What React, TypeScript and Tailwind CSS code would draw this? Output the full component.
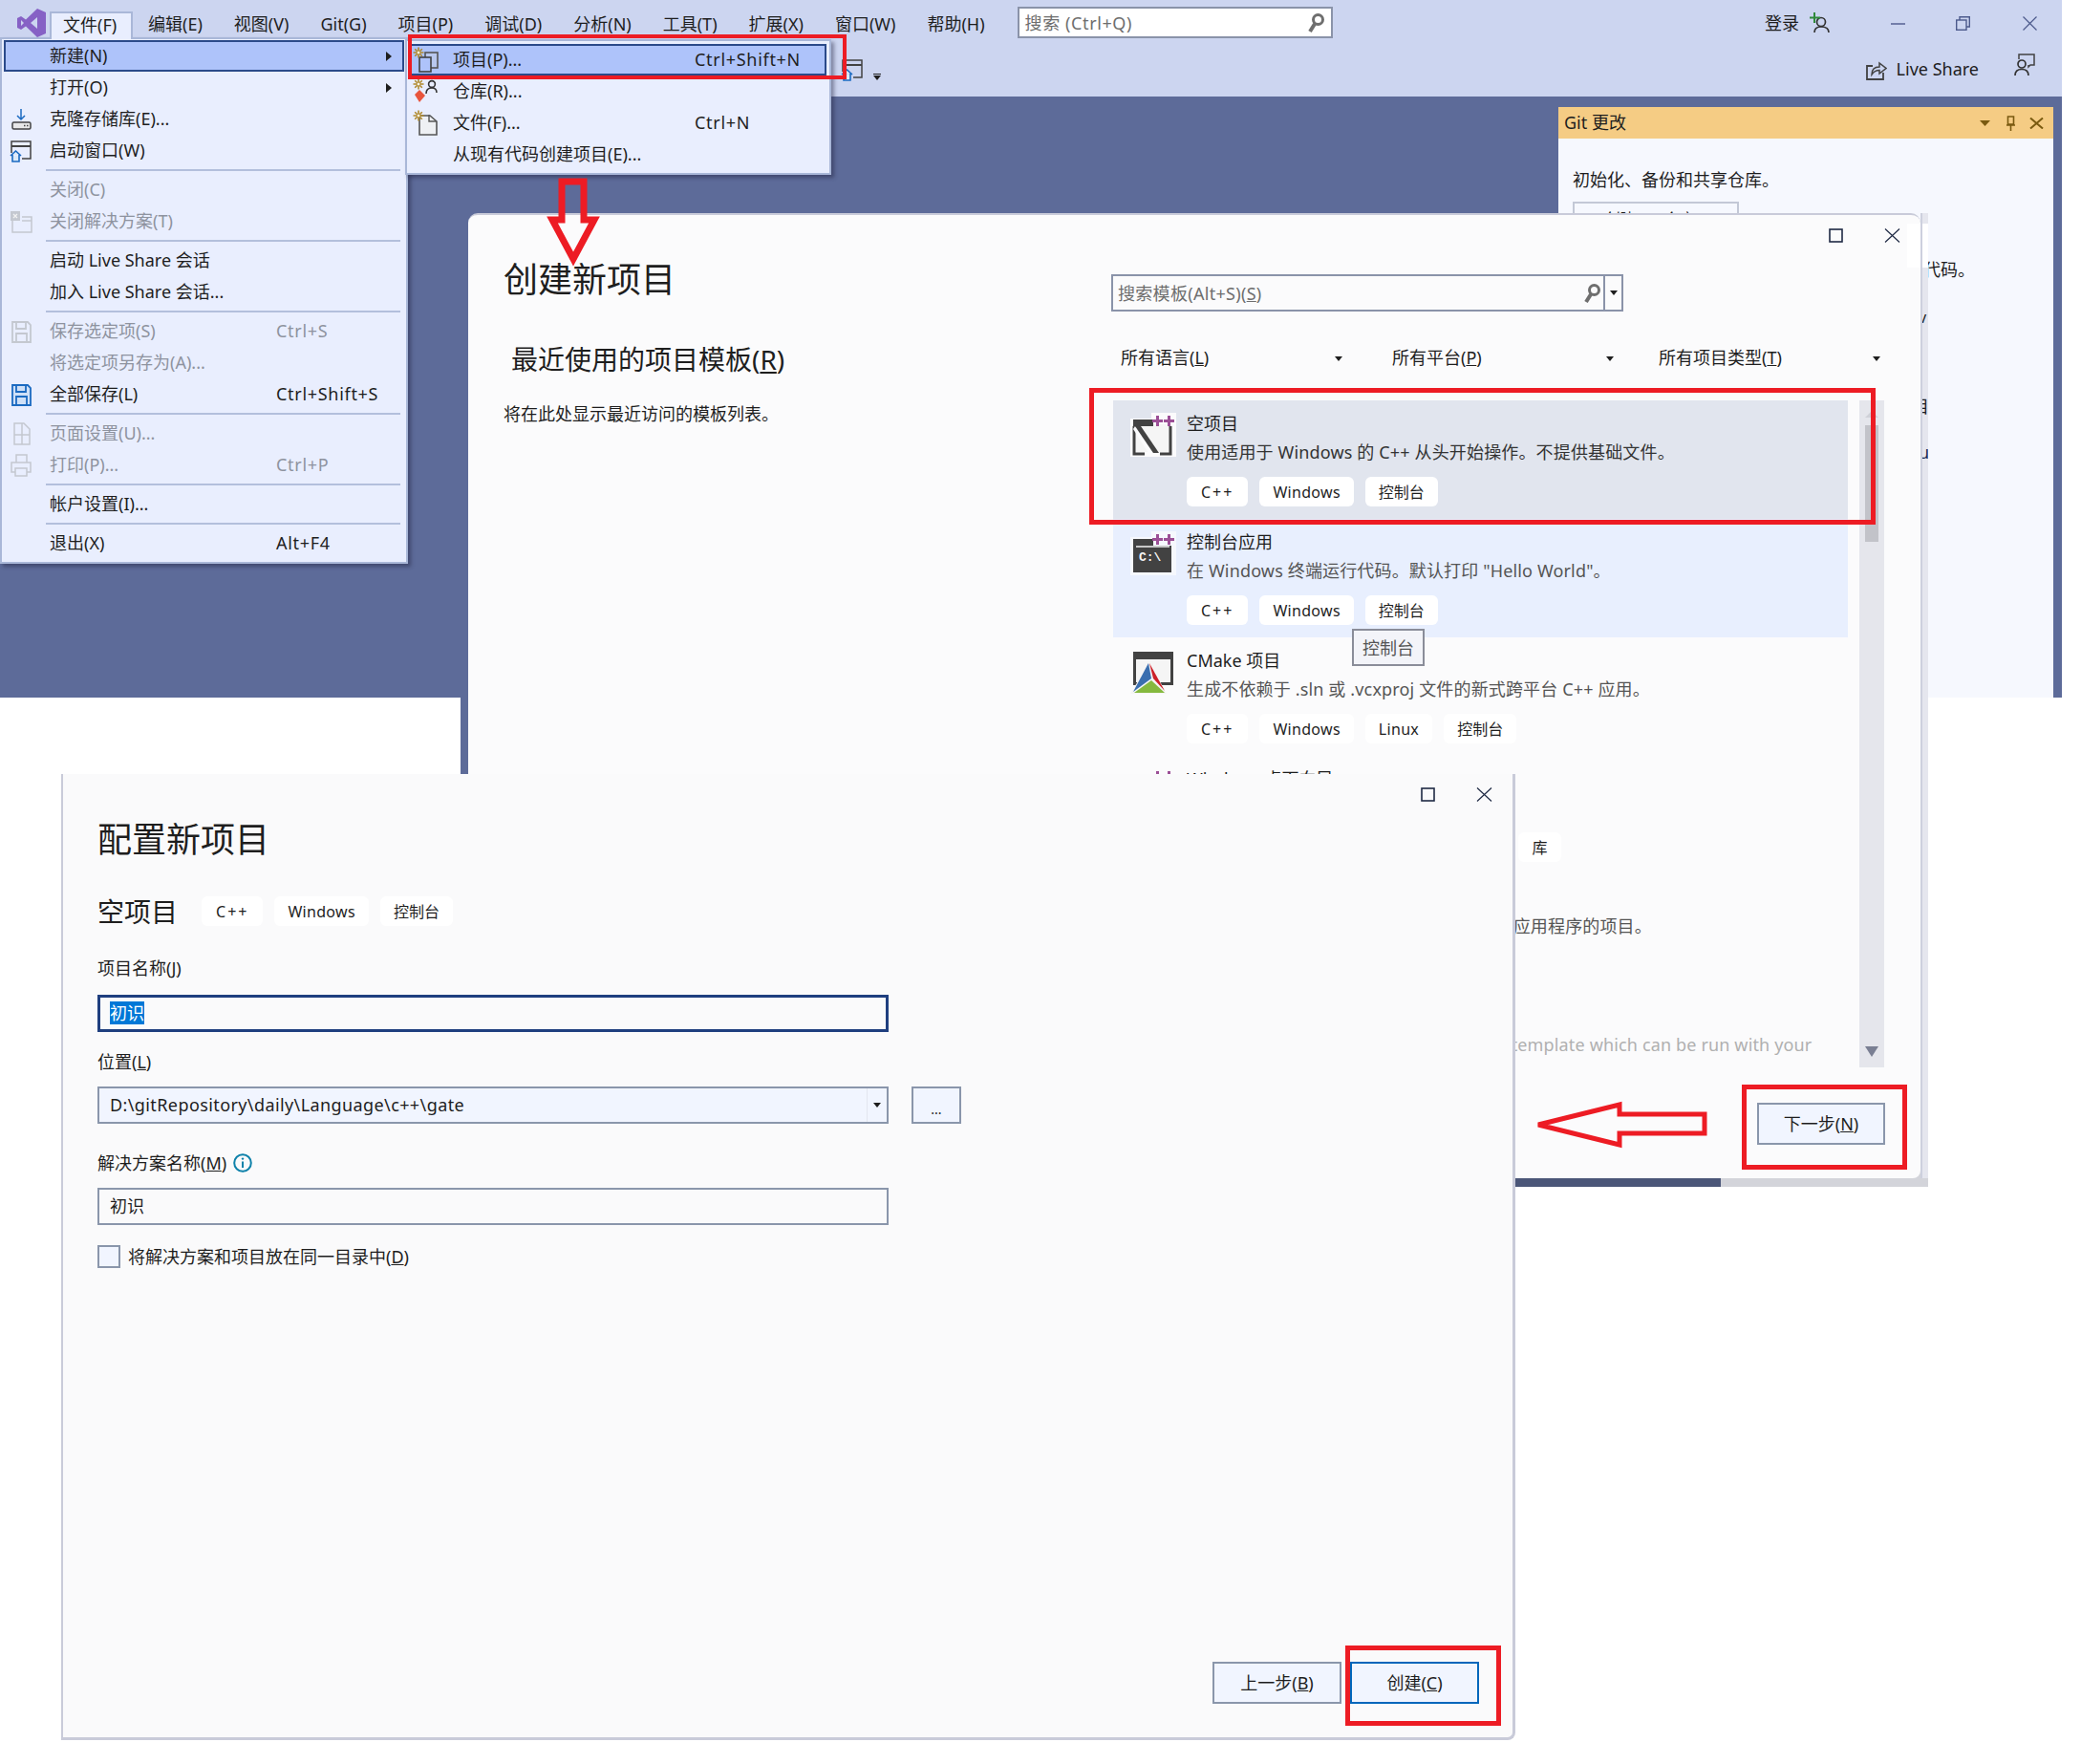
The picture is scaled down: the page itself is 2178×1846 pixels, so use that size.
import type { ReactNode } from "react";

const menuBar = ["编辑(E)", "视图(V)", "Git(G)", "项目(P)", "调试(D)", "分析(N)", "工具(T)", "扩展(X)", "窗口(W)", "帮助(H)"];

function Sparkle() {
  return (
    <g stroke="#b08a2e" strokeWidth="1.6">
      <path d="M6 0.5V11.5M0.5 6H11.5M2.2 2.2L9.8 9.8M9.8 2.2L2.2 9.8" />
      <circle cx="6" cy="6" r="2" fill="#f7f3e3" strokeWidth="1" />
    </g>
  );
}

function CloneIcon() {
  return (
    <svg width="24" height="24" viewBox="0 0 24 24" fill="none">
      <path d="M12 1V12M8 8L12 12L16 8" stroke="#1b6ac1" strokeWidth="1.5" />
      <rect x="3" y="15" width="19" height="7" rx="1.5" fill="#e8e8e8" stroke="#424242" strokeWidth="1.5" />
      <path d="M15 18.5H16.5M18 18.5H19.5" stroke="#424242" strokeWidth="1.5" />
    </svg>
  );
}

function StartWindowIcon() {
  return (
    <svg width="24" height="24" viewBox="0 0 24 24" fill="none">
      <path d="M2 14V2H22V20H13" stroke="#424242" strokeWidth="1.5" />
      <path d="M2 7H22" stroke="#424242" strokeWidth="2" />
      <path d="M1 17L6.5 12L12 17M3 16V23H10V16" fill="#dbe9f8" stroke="#1b6ac1" strokeWidth="1.6" />
    </svg>
  );
}

function CloseSolutionIcon() {
  return (
    <svg width="24" height="24" viewBox="0 0 24 24" fill="none">
      <path d="M3 8V23H23V7H13" stroke="#c4c8d0" strokeWidth="1.5" />
      <path d="M13 11H23" stroke="#c4c8d0" strokeWidth="1.5" />
      <rect x="1" y="1" width="10" height="10" fill="#c4c8d0" />
      <path d="M4 4L8 8M8 4L4 8" stroke="#f2f2f2" strokeWidth="1.3" />
    </svg>
  );
}

function SaveIcon({ color, fill }: { color: string; fill: string }) {
  return (
    <svg width="24" height="24" viewBox="0 0 24 24" fill="none">
      <path d="M3 2H19L22 5V23H3Z" fill={fill} stroke={color} strokeWidth="1.8" />
      <path d="M7 2V9H17V2M7 23V14H18V23" stroke={color} strokeWidth="1.8" />
    </svg>
  );
}

function PageSetupIcon() {
  return (
    <svg width="24" height="24" viewBox="0 0 24 24" fill="none" stroke="#c4c8d0" strokeWidth="1.5">
      <path d="M5 1H15L21 7V23H5Z M13 1V23M5 13H21" />
    </svg>
  );
}

function PrintIcon() {
  return (
    <svg width="24" height="24" viewBox="0 0 24 24" fill="none" stroke="#c4c8d0" strokeWidth="1.5">
      <path d="M7 9V1H18V9M6 19H2V9H22V19H18" />
      <path d="M6 15H18V23H6Z" />
    </svg>
  );
}

function ProjectMenuIcon() {
  return (
    <svg width="28" height="28" viewBox="0 0 28 28" fill="none">
      <rect x="13" y="6" width="13" height="16" fill="#b9c8ee" stroke="#555" strokeWidth="1.6" />
      <rect x="7" y="11" width="12" height="15" fill="#aec3fa" stroke="#424242" strokeWidth="1.6" />
      <Sparkle />
    </svg>
  );
}

function RepoMenuIcon() {
  return (
    <svg width="28" height="28" viewBox="0 0 28 28" fill="none">
      <Sparkle />
      <path d="M2 17L7 12L13 18L7 25Z" fill="#e8553d" />
      <circle cx="20" cy="6" r="3.4" stroke="#333" strokeWidth="1.6" />
      <path d="M14 16C14 11 17 10 20 10C23 10 25 12 25 15" stroke="#333" strokeWidth="1.6" />
    </svg>
  );
}

function FileMenuIcon() {
  return (
    <svg width="28" height="28" viewBox="0 0 28 28" fill="none">
      <path d="M7 6H18L25 12V26H7Z" fill="#eef0f4" stroke="#555" strokeWidth="1.6" />
      <path d="M17 5V12H25" stroke="#555" strokeWidth="1.4" />
      <Sparkle />
    </svg>
  );
}

function Plus2() {
  return (
    <g fill="#9b4f96">
      <path d="M27 3H30V7H34V10H30V14H27V10H23V7H27Z" />
      <path d="M39 3H42V7H46V10H42V14H39V10H35V7H39Z" />
    </g>
  );
}

function EmptyProjectIcon() {
  return (
    <svg width="48" height="48" viewBox="0 0 48 48">
      <path d="M0 6H22V0H48V46H0Z" fill="#fbfbfc" />
      <rect x="5" y="12" width="37" height="29" fill="#f5f5f5" />
      <path d="M3 7H24V14H3Z" fill="#424242" />
      <path d="M42 14V43H31M4 14V43H15" fill="none" stroke="#424242" strokeWidth="3" />
      <path d="M3 17L5 14L24 42L19 42Z" fill="#fbfbfc" />
      <path d="M5 14H11L30 42H24Z" fill="#424242" />
      <Plus2 />
    </svg>
  );
}

function ConsoleIcon() {
  return (
    <svg width="48" height="48" viewBox="0 0 48 48">
      <path d="M0 6H22V0H48V46H0Z" fill="#f6f8fd" />
      <path d="M3 8H24V15H43V43H3Z" fill="#424242" />
      <path d="M6 16H41" stroke="#f5f5f5" strokeWidth="1.4" />
      <text x="9" y="31" fill="#f5f5f5" fontSize="13" fontWeight="700" fontFamily="Liberation Mono">C:\</text>
      <Plus2 />
    </svg>
  );
}

function CMakeIcon() {
  return (
    <svg width="48" height="48" viewBox="0 0 48 48">
      <path d="M3 2H45V37H3Z" fill="#424242" />
      <rect x="6" y="10" width="36" height="24" fill="#f5f5f5" />
      <path d="M20 13L0 46H38Z" fill="#f5f5f5" />
      <path d="M19 14L3 44L22 30Z" fill="#3a6eaf" />
      <path d="M20 14L36 43L24 30Z" fill="#cc2029" />
      <path d="M4 45L22 32L36 45Z" fill="#85b93f" />
    </svg>
  );
}

function SearchGlyph() {
  return (
    <svg width="20" height="22" viewBox="0 0 20 22" fill="none" stroke="#6e6e6e">
      <circle cx="12.5" cy="7.5" r="5" strokeWidth="3" />
      <path d="M9 12L4 20" strokeWidth="4" />
    </svg>
  );
}

function Caret({ color = "#1e1e1e" }: { color?: string }) {
  return (
    <svg width="8" height="5" viewBox="0 0 8 5">
      <path d="M0 0H8L4 5Z" fill={color} />
    </svg>
  );
}

function SideCaret() {
  return (
    <svg width="6" height="10" viewBox="0 0 6 10">
      <path d="M0 0L6 5L0 10Z" fill="#1e1e1e" />
    </svg>
  );
}

function WindowControls() {
  return (
    <div className="absolute right-[21px] top-[14px] flex items-center gap-[43px]">
      <svg width="15" height="15" viewBox="0 0 15 15" fill="none">
        <rect x="1" y="1" width="13" height="13" stroke="#1f2a44" strokeWidth="1.6" />
      </svg>
      <svg width="17" height="15" viewBox="0 0 17 15" fill="none">
        <path d="M1 0.5L16 14.5M16 0.5L1 14.5" stroke="#1f2a44" strokeWidth="1.2" />
      </svg>
    </div>
  );
}

function Tag({ children }: { children: string }) {
  const spacing = children === "C++" ? "tracking-[2px] px-[15px]" : children === "控制台" ? "px-[14px]" : "tracking-[0.3px] px-[14px]";
  return (
    <span className={`flex h-[31px] items-center rounded-[6px] bg-white pt-[1px] text-[16px] leading-none text-[#1e1e1e] ${spacing}`}>
      {children}
    </span>
  );
}

type MenuRow = {
  label?: string;
  shortcut?: string;
  icon?: ReactNode;
  disabled?: boolean;
  arrow?: boolean;
  active?: boolean;
  sep?: boolean;
};

const fileMenu: MenuRow[] = [
  { label: "新建(N)", arrow: true, active: true },
  { label: "打开(O)", arrow: true },
  { label: "克隆存储库(E)...", icon: <CloneIcon /> },
  { label: "启动窗口(W)", icon: <StartWindowIcon /> },
  { sep: true },
  { label: "关闭(C)", disabled: true },
  { label: "关闭解决方案(T)", disabled: true, icon: <CloseSolutionIcon /> },
  { sep: true },
  { label: "启动 Live Share 会话" },
  { label: "加入 Live Share 会话..." },
  { sep: true },
  { label: "保存选定项(S)", shortcut: "Ctrl+S", disabled: true, icon: <SaveIcon color="#c4c8d0" fill="none" /> },
  { label: "将选定项另存为(A)...", disabled: true },
  { label: "全部保存(L)", shortcut: "Ctrl+Shift+S", icon: <SaveIcon color="#1b6ac1" fill="#cfe0f7" /> },
  { sep: true },
  { label: "页面设置(U)...", disabled: true, icon: <PageSetupIcon /> },
  { label: "打印(P)...", shortcut: "Ctrl+P", disabled: true, icon: <PrintIcon /> },
  { sep: true },
  { label: "帐户设置(I)..." },
  { sep: true },
  { label: "退出(X)", shortcut: "Alt+F4" },
];

const newMenu = [
  { label: "项目(P)...", shortcut: "Ctrl+Shift+N", icon: <ProjectMenuIcon />, active: true },
  { label: "仓库(R)...", icon: <RepoMenuIcon /> },
  { label: "文件(F)...", shortcut: "Ctrl+N", icon: <FileMenuIcon /> },
  { label: "从现有代码创建项目(E)..." },
];

const templates = [
  {
    title: "空项目",
    desc: "使用适用于 Windows 的 C++ 从头开始操作。不提供基础文件。",
    tags: ["C++", "Windows", "控制台"],
    icon: <EmptyProjectIcon />,
    row: "bg-[#e1e5ee]",
    descColor: "text-[#333333]",
  },
  {
    title: "控制台应用",
    desc: '在 Windows 终端运行代码。默认打印 "Hello World"。',
    tags: ["C++", "Windows", "控制台"],
    icon: <ConsoleIcon />,
    row: "bg-[#e8effe]",
    descColor: "text-[#555555]",
  },
  {
    title: "CMake 项目",
    desc: "生成不依赖于 .sln 或 .vcxproj 文件的新式跨平台 C++ 应用。",
    tags: ["C++", "Windows", "Linux", "控制台"],
    icon: <CMakeIcon />,
    row: "",
    descColor: "text-[#555555]",
  },
  {
    title: "Windows 桌面向导",
    desc: "使用向导创建你自己的 Windows 应用。",
    tags: ["C++", "Windows", "桌面", "控制台", "库"],
    icon: <EmptyProjectIcon />,
    row: "",
    descColor: "text-[#555555]",
  },
  {
    title: "Windows 桌面应用程序",
    desc: "具有在 Windows 上运行的图形用户界面的应用程序的项目。",
    tags: [],
    icon: null,
    row: "",
    descColor: "text-[#555555]",
  },
  {
    title: "",
    desc: "A blank, single-file C++, console project template which can be run with your",
    tags: [],
    icon: null,
    row: "",
    descColor: "text-[#b0b0b0]",
  },
];

export default function App() {
  return (
    <div className="relative h-[1846px] w-[2178px] overflow-hidden bg-white font-['Noto_Sans','Noto_Sans_CJK_SC',sans-serif] text-[18px] leading-[24px] text-[#1e1e1e]">
      {/* Visual Studio main window */}
      <div className="absolute left-0 top-0 flex h-[730px] w-[2158px] flex-col bg-[#5d6b99]">
        <div className="h-[101px] bg-[#ccd5f0]">
          <div className="flex h-[50px] items-start">
            <svg className="ml-[18px] mt-[9px]" width="30" height="30" viewBox="0 0 30 30">
              <path
                fill="#8661c5"
                fillRule="evenodd"
                d="M21 0L30 4V26L21 30L9 18.5L4 22L0 20V10L4 8L9 11.5ZM21 9L14 15L21 21ZM4 12V18L7 15Z"
              />
            </svg>
            <div className="relative z-30 ml-[4px] mt-[12px] h-[29px] w-[87px] border-x-2 border-t-2 border-[#a9b7d8] bg-[#e9eefe] pl-[12px] leading-[24px]">
              文件(F)
            </div>
            <div className="ml-[16px] mt-[12px] flex gap-[33px] leading-[26px]">
              {menuBar.map((item) => (
                <span key={item}>{item}</span>
              ))}
            </div>
            <div className="ml-[34px] mt-[7px] flex h-[33px] w-[330px] items-center justify-between border-2 border-[#8a93a9] bg-white pl-[6px] pr-[6px] tracking-[0.6px] text-[#6e6e6e]">
              搜索 (Ctrl+Q)
              <SearchGlyph />
            </div>
            <div className="ml-auto mr-[26px] mt-[12px] flex items-center">
              <span>登录</span>
              <svg className="ml-[11px]" width="21" height="22" viewBox="0 0 21 22" fill="none">
                <circle cx="12" cy="10" r="4.5" stroke="#333" strokeWidth="1.7" />
                <path d="M5 21C5 16 8 15 12 15C16 15 20 16 20 21" stroke="#333" strokeWidth="1.7" />
                <path d="M5 0V11M0 5.5H11" stroke="#2f8a3b" strokeWidth="2" />
              </svg>
              <svg className="ml-[64px]" width="15" height="15" viewBox="0 0 15 15">
                <path d="M0 8H15" stroke="#4c5a8c" strokeWidth="1.4" />
              </svg>
              <svg className="ml-[53px]" width="15" height="15" viewBox="0 0 15 15" fill="none">
                <path d="M4 4V0.7H14.3V11H11" stroke="#4c5a8c" strokeWidth="1.4" />
                <rect x="0.7" y="4" width="10.3" height="10.3" stroke="#4c5a8c" strokeWidth="1.4" />
              </svg>
              <svg className="ml-[55px]" width="15" height="15" viewBox="0 0 15 15">
                <path d="M0.5 0.5L14.5 14.5M14.5 0.5L0.5 14.5" stroke="#4c5a8c" strokeWidth="1.2" />
              </svg>
            </div>
          </div>
          <div className="flex h-[51px] items-start">
            <div className="ml-[880px] mt-[11px]">
              <StartWindowIcon />
            </div>
            <div className="ml-[10px] mt-[27px] flex flex-col gap-[1px]">
              <span className="h-[1px] w-[8px] bg-[#1e1e1e]" />
              <Caret />
            </div>
            <svg className="ml-auto mt-[12px]" width="22" height="22" viewBox="0 0 22 22" fill="none">
              <path d="M7 7H1V21H18V14" stroke="#424242" strokeWidth="1.8" />
              <path d="M6 16C6 10 9 8 14 8V4L21 9.5L14 15V11.5C10 11.5 8 13 6 16Z" stroke="#424242" strokeWidth="1.5" />
            </svg>
            <span className="ml-[10px] mt-[10px] leading-[24px]">Live Share</span>
            <svg className="ml-[37px] mr-[28px] mt-[6px]" width="22" height="23" viewBox="0 0 22 23" fill="none">
              <path d="M5 6V1H21V12H17L15 14V12" stroke="#424242" strokeWidth="1.5" />
              <circle cx="8" cy="11" r="4" stroke="#333" strokeWidth="1.7" />
              <path d="M1 23C1 18 4 16.5 8 16.5C12 16.5 15 18 15 23" stroke="#333" strokeWidth="1.7" />
            </svg>
          </div>
        </div>

        {/* Git changes tool window */}
        <div className="flex flex-1 justify-end pr-[9px] pt-[11px]">
          <div className="w-[518px] bg-[#f6f8fe]">
            <div className="flex h-[33px] items-center bg-[#f5cc84] pl-[6px] pr-[10px]">
              <span className="pb-[2px]">Git 更改</span>
              <svg className="ml-auto" width="11" height="6" viewBox="0 0 11 6">
                <path d="M0 0H11L5.5 6Z" fill="#7a5a10" />
              </svg>
              <svg className="ml-[17px]" width="9" height="16" viewBox="0 0 9 16" fill="none">
                <path d="M1.5 1H7.5V9H1.5ZM0 10H9M4.5 10V16" stroke="#7a5a10" strokeWidth="1.6" />
              </svg>
              <svg className="ml-[15px]" width="15" height="12" viewBox="0 0 15 12">
                <path d="M1 0.5L14 11.5M14 0.5L1 11.5" stroke="#7a5a10" strokeWidth="2" />
              </svg>
            </div>
            <p className="mt-[31px] pl-[15px]">初始化、备份和共享仓库。</p>
            <div className="ml-[15px] mt-[11px] flex h-[36px] w-[174px] items-center justify-center border-2 border-[#c3c8d6] text-[16px]">
              创建 Git 仓库...
            </div>
            <p className="mt-[23px] pl-[382px]">代码。</p>
          </div>
        </div>
      </div>

      {/* File > New menus */}
      <div className="absolute left-0 top-[39px] z-20 h-[551px] w-[427px] border-2 border-[#a9b7d8] bg-[#e9eefe] py-[1px] pl-[2px] pr-[2px] shadow-[3px_3px_4px_rgba(30,30,60,0.45)]">
        {fileMenu.map((row, i) =>
          row.sep ? (
            <div key={i} className="flex h-[8px] items-center pl-[44px] pr-[4px]">
              <div className="h-[2px] w-full bg-[#b3bfdc]" />
            </div>
          ) : (
            <div
              key={i}
              className={`flex h-[33px] items-center ${
                row.active ? "border-2 border-[#2b4a8a] bg-[#aec3fa]" : "border-2 border-transparent"
              } ${row.disabled ? "text-[#8e939f]" : ""}`}
            >
              <span className="flex w-[46px] shrink-0 items-center pl-[4px]">{row.icon}</span>
              <span className="w-[237px] shrink-0 whitespace-nowrap pb-[2px]">{row.label}</span>
              <span className="whitespace-nowrap pb-[2px] tracking-[0.7px]">{row.shortcut}</span>
              {row.arrow && (
                <span className="ml-auto pr-[11px]">
                  <SideCaret />
                </span>
              )}
            </div>
          ),
        )}
      </div>
      <div className="absolute left-[424px] top-[41px] z-20 h-[142px] w-[446px] border-2 border-[#a9b7d8] bg-[#e9eefe] pl-[3px] pr-[3px] pt-[3px] shadow-[3px_3px_4px_rgba(30,30,60,0.45)]">
        {newMenu.map((row) => (
          <div
            key={row.label}
            className={`flex h-[33px] items-center border-2 ${
              row.active ? "border-[#2b4a8a] bg-[#aec3fa]" : "border-transparent"
            }`}
          >
            <span className="flex w-[43px] shrink-0 items-center pl-[1px]">{row.icon}</span>
            <span className="w-[253px] shrink-0 whitespace-nowrap pb-[2px]">{row.label}</span>
            <span className="whitespace-nowrap pb-[2px] tracking-[0.7px]">{row.shortcut}</span>
          </div>
        ))}
      </div>

      {/* Create new project dialog */}
      <div className="absolute left-[482px] top-[223px] z-10 flex h-[1019px] w-[1536px] flex-col">
        <div className="flex h-[1010px]">
          <div className="w-[8px] bg-[#5d6b99]" />
          <div className="relative flex w-[1520px] rounded-t-[10px] rounded-br-[8px] border-t-2 border-[#c9cbd9] bg-[#fbfbfc] shadow-[8px_8px_0_#d3d4da]">
            <WindowControls />
            <div className="w-[673px] pl-[37px] pt-[44px]">
              <h1 className="text-[36px] font-normal leading-[48px]">创建新项目</h1>
              <h2 className="mt-[39px] pl-[8px] text-[28px] font-normal leading-[40px]">
                最近使用的项目模板(<u>R</u>)
              </h2>
              <p className="mt-[25px] text-[18px] leading-[24px]">将在此处显示最近访问的模板列表。</p>
            </div>
            <div className="flex-1 pt-[62px]">
              <div className="flex h-[39px] w-[536px] border-2 border-[#8a93a9]">
                <div className="flex flex-1 items-center justify-between border-r-2 border-[#8a93a9] pl-[5px] pr-[2px] tracking-[0.3px] text-[#6e6e6e]">
                  <span>
                    搜索模板(Alt+S)(<u>S</u>)
                  </span>
                  <SearchGlyph />
                </div>
                <div className="flex w-[17px] items-center justify-center">
                  <Caret />
                </div>
              </div>
              <div className="mt-[31px] flex h-[36px]">
                {["所有语言", "所有平台", "所有项目类型"].map((name, i) => (
                  <div
                    key={name}
                    className={`flex w-[247px] items-center justify-between pl-[10px] pr-[5px] ${
                      i === 0 ? "mr-[37px]" : i === 1 ? "mr-[32px]" : ""
                    }`}
                  >
                    <span className="pb-[2px]">
                      {name}(<u>{["L", "P", "T"][i]}</u>)
                    </span>
                    <Caret />
                  </div>
                ))}
              </div>
              <div className="ml-[2px] mt-[26px] flex h-[698px] gap-[12px]">
                <div className="h-full w-[769px] overflow-hidden">
                  {templates.map((item, i) => (
                    <div key={i} className={`flex h-[124px] pl-[18px] pt-[13px] ${item.row}`}>
                      <div className="h-[48px] w-[48px] shrink-0">{item.icon}</div>
                      <div className="ml-[11px] min-w-0">
                        <div className="h-[24px] -translate-y-px whitespace-nowrap">{item.title}</div>
                        <div className={`mt-[6px] -translate-y-px whitespace-nowrap tracking-[0.15px] ${item.descColor}`}>{item.desc}</div>
                        {item.tags.length > 0 && (
                          <div className="mt-[13px] flex gap-[12px]">
                            {item.tags.map((tag) => (
                              <Tag key={tag}>{tag}</Tag>
                            ))}
                          </div>
                        )}
                      </div>
                    </div>
                  ))}
                </div>
                <div className="flex w-[26px] flex-col items-center bg-[#e5e6ec] pb-[11px] pt-[11px]">
                  <svg width="14" height="7" viewBox="0 0 14 7">
                    <path d="M0 7H14L7 0Z" fill="#d0d1d8" />
                  </svg>
                  <div className="mt-[8px] h-[122px] w-[14px] bg-[#c2c3c9]" />
                  <svg className="mt-auto" width="14" height="11" viewBox="0 0 14 11">
                    <path d="M0 0H14L7 11Z" fill="#7a7f93" />
                  </svg>
                </div>
              </div>
              <button className="ml-[676px] mt-[37px] h-[44px] w-[134px] border-2 border-[#8a96ab] bg-[#f1f5ff]">
                下一步(<u>N</u>)
              </button>
            </div>
            {/* tooltip over the list */}
            <div className="absolute left-[925px] top-[433px] flex h-[39px] w-[76px] items-center justify-center border-2 border-[#8a8d99] bg-[#f3f4f9] text-[#555555]">
              控制台
            </div>
          </div>
          <div className="relative z-10 w-[8px] overflow-hidden border-l-2 border-[#cdd0de] bg-[#e5e6ee]">
            <span className="absolute left-[-4px] top-[97px] text-[16px]">v</span>
            <span className="absolute left-[-11px] top-[190px]">目</span>
            <span className="absolute left-[-4px] top-[238px] text-[#1b2a55]">u</span>
            <div className="absolute left-0 top-[11px] h-[46px] w-[8px] bg-white" />
          </div>
        </div>
        <div className="relative z-10 flex h-[9px]">
          <div className="w-[1319px] bg-[#4b5678]" />
          <div className="flex-1 bg-[#d3d4da]" />
        </div>
      </div>
      <div className="absolute left-[1996px] top-[234px] z-10 h-[46px] w-[14px] bg-white" />

      {/* Configure new project dialog */}
      <div className="absolute left-[64px] top-[810px] z-20 flex h-[1011px] w-[1522px] flex-col rounded-br-[8px] border-b-[3px] border-l-2 border-r-[3px] border-[#c9cbd9] bg-[#fafafb] pl-[36px] pr-[35px] pt-[45px]">
        <WindowControls />
        <h1 className="text-[36px] font-normal leading-[48px]">配置新项目</h1>
        <div className="mt-[35px] flex h-[31px] items-center">
          <span className="text-[28px]">空项目</span>
          <div className="ml-[25px] flex gap-[12px]">
            <Tag>C++</Tag>
            <Tag>Windows</Tag>
            <Tag>控制台</Tag>
          </div>
        </div>
        <label className="mt-[32px] mb-[1px]">
          项目名称(<u>J</u>)
        </label>
        <div className="mt-[15px] flex h-[39px] w-[828px] items-center border-[3px] border-[#1f3f7f] pb-[1px] pl-[10px]">
          <span className="bg-[#0078d7] text-white">初识</span>
        </div>
        <label className="mt-[19px] mb-[1px]">
          位置(<u>L</u>)
        </label>
        <div className="mt-[13px] flex gap-[24px]">
          <div className="flex h-[39px] w-[828px] items-center border-2 border-[#8a96ab] bg-[#f1f5ff] pl-[11px]">
            <span className="pb-[2px] tracking-[0.4px]">D:\gitRepository\daily\Language\c++\gate</span>
            <div className="ml-auto flex h-full w-[21px] items-center justify-center border-l border-[#e3e6ef]">
              <Caret />
            </div>
          </div>
          <button className="flex h-[39px] w-[52px] items-end justify-center border-2 border-[#8a96ab] bg-[#f1f5ff] pb-[6px] text-[14px] leading-none">
            ...
          </button>
        </div>
        <div className="mb-[1px] mt-[29px] flex items-center gap-[7px]">
          <label>
            解决方案名称(<u>M</u>)
          </label>
          <svg width="20" height="20" viewBox="0 0 20 20" fill="none">
            <circle cx="10" cy="10" r="8.8" stroke="#0f82aa" strokeWidth="2" />
            <path d="M10 8.5V15" stroke="#0f82aa" strokeWidth="2" />
            <circle cx="10" cy="5.6" r="1.2" fill="#0f82aa" />
          </svg>
        </div>
        <div className="mt-[13px] flex h-[39px] w-[828px] items-center border-2 border-[#8a96ab] pb-[2px] pl-[11px]">初识</div>
        <div className="mt-[21px] flex items-center gap-[8px]">
          <span className="h-[24px] w-[24px] border-2 border-[#8a96ab] bg-[#f1f5ff]" />
          <span>
            将解决方案和项目放在同一目录中(<u>D</u>)
          </span>
        </div>
        <div className="mb-[35px] mt-auto flex justify-end gap-[9px]">
          <button className="h-[44px] w-[135px] border-2 border-[#8a96ab] bg-[#f1f5ff]">
            上一步(<u>B</u>)
          </button>
          <button className="h-[44px] w-[135px] border-2 border-[#0066bb] bg-[#f1f5ff]">
            创建(<u>C</u>)
          </button>
        </div>
      </div>

      {/* Red hand-drawn annotations */}
      <div className="absolute left-[427px] top-[36px] z-40 h-[47px] w-[459px] border-4 border-[#ed1c24]" />
      <div className="absolute left-[1140px] top-[406px] z-40 h-[143px] w-[823px] border-[5px] border-[#ed1c24]" />
      <div className="absolute left-[1823px] top-[1135px] z-40 h-[89px] w-[173px] border-[5px] border-[#ed1c24]" />
      <div className="absolute left-[1408px] top-[1722px] z-40 h-[84px] w-[163px] border-[5px] border-[#ed1c24]" />
      <svg className="absolute left-[570px] top-[183px] z-40" width="62" height="96" viewBox="0 0 62 96" fill="none">
        <path d="M18 7H41V47H52L30 88L8 47H18Z" stroke="#ed1c24" strokeWidth="7" />
      </svg>
      <svg className="absolute left-[1600px] top-[1148px] z-40" width="192" height="58" viewBox="0 0 192 58" fill="none">
        <path d="M10 29L95 8V18H184V38H95V50Z" stroke="#ed1c24" strokeWidth="5" />
      </svg>
    </div>
  );
}
